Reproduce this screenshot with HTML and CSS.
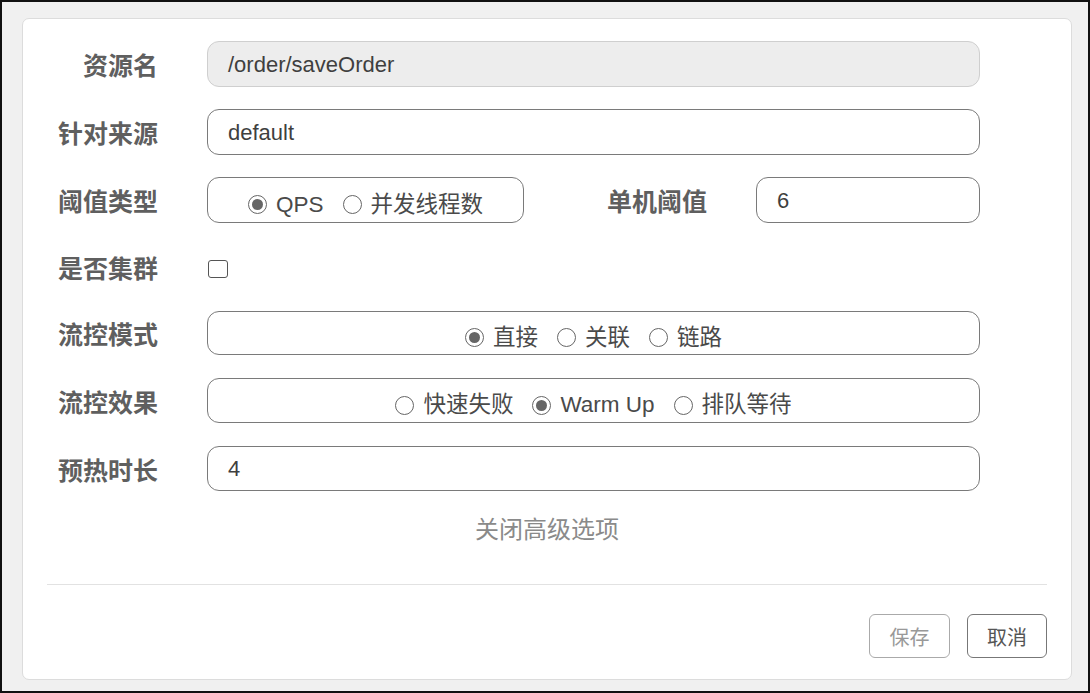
FILE: index.html
```html
<!DOCTYPE html>
<html lang="zh">
<head>
<meta charset="utf-8">
<title>流控规则</title>
<link rel="stylesheet" href="styles.css">
</head>
<body>
<div class="frame">
  <div class="card">
    <div class="form">
      <div class="row">
        <div class="label">资源名</div>
        <div class="input disabled">/order/saveOrder</div>
      </div>
      <div class="row">
        <div class="label">针对来源</div>
        <div class="input">default</div>
      </div>
      <div class="row">
        <div class="label">阈值类型</div>
        <div class="radio-box small">
          <span class="opt"><span class="radio checked"></span><span class="latin">QPS</span></span>
          <span class="opt"><span class="radio"></span><span class="cjk">并发线程数</span></span>
        </div>
        <div class="label label-mid">单机阈值</div>
        <div class="input short">6</div>
      </div>
      <div class="row row-check">
        <div class="label">是否集群</div>
        <span class="checkbox"></span>
      </div>
      <div class="row row-44">
        <div class="label">流控模式</div>
        <div class="radio-box">
          <span class="opt"><span class="radio checked"></span><span class="cjk">直接</span></span>
          <span class="opt"><span class="radio"></span><span class="cjk">关联</span></span>
          <span class="opt"><span class="radio"></span><span class="cjk">链路</span></span>
        </div>
      </div>
      <div class="row row-45">
        <div class="label">流控效果</div>
        <div class="radio-box">
          <span class="opt"><span class="radio"></span><span class="cjk">快速失败</span></span>
          <span class="opt"><span class="radio checked"></span><span class="latin">Warm Up</span></span>
          <span class="opt"><span class="radio"></span><span class="cjk">排队等待</span></span>
        </div>
      </div>
      <div class="row row-45">
        <div class="label">预热时长</div>
        <div class="input">4</div>
      </div>
    </div>
    <div class="toggle">关闭高级选项</div>
    <div class="divider"></div>
    <div class="footer">
      <button class="btn btn-disabled">保存</button>
      <button class="btn">取消</button>
    </div>
  </div>
</div>
</body>
</html>
```

FILE: styles.css
```css
* { box-sizing: border-box; }
html, body {
  margin: 0;
  padding: 0;
}
body {
  font-family: "Liberation Sans", "Noto Sans CJK SC", sans-serif;
  color: #444;
  background: #f0f0f0;
}
.frame {
  width: 1090px;
  height: 693px;
  border: 2px solid #111;
  background: #f0f0f0;
  padding: 16px 16px 11px 20px;
}
.card {
  height: 100%;
  background: #fff;
  border: 1px solid #dcdcdc;
  border-radius: 7px;
  padding-top: 22px;
  display: flex;
  flex-direction: column;
}
.form {
  display: flex;
  flex-direction: column;
  gap: 22px;
}
.row {
  display: flex;
  align-items: center;
  height: 46px;
}
.row-check { height: 44px; }
.row-44 { height: 44px; }
.row-45 { height: 45px; margin-top: 1px; }
.label {
  width: 135px;
  text-align: right;
  margin-right: 49px;
  font-size: 25px;
  font-weight: bold;
  color: #5f5f5f;
  flex: none;
}
.label-mid {
  width: 183px;
  margin-right: 49px;
}
.input {
  width: 773px;
  height: 100%;
  border: 1.5px solid #7a7a7a;
  border-radius: 12px;
  padding-left: 20px;
  padding-top: 1px;
  display: flex;
  align-items: center;
  font-size: 22px;
  color: #3f3f3f;
}
.input.disabled {
  background: #ededed;
  border-color: #cfcfcf;
}
.input.short { width: 224px; }
.radio-box {
  width: 773px;
  height: 100%;
  border: 1.5px solid #7a7a7a;
  border-radius: 12px;
  display: flex;
  align-items: center;
  justify-content: center;
  gap: 19px;
  font-size: 22px;
  color: #4a4a4a;
  padding-top: 9px;
}
.radio-box.small { width: 317px; }
.opt {
  display: inline-flex;
  align-items: center;
  gap: 9px;
}
.cjk {
  line-height: 26px;
  font-size: 22.5px;
}
.latin {
  font-size: 22.5px;
  line-height: 26px;
}
.radio {
  width: 19px;
  height: 19px;
  border: 1.5px solid #666;
  border-radius: 50%;
  display: inline-flex;
  align-items: center;
  justify-content: center;
  flex: none;
}
.radio.checked::after {
  content: "";
  width: 11px;
  height: 11px;
  border-radius: 50%;
  background: #666;
}
.checkbox {
  width: 20px;
  height: 18px;
  border: 1.5px solid #555;
  border-radius: 3px;
  margin-left: 1px;
  margin-top: 4px;
}
.toggle {
  text-align: center;
  font-size: 24px;
  color: #8a8a8a;
  margin-top: 23px;
  line-height: 32px;
}
.divider {
  margin: 38px 24px 0 24px;
  border-top: 1px solid #e2e2e2;
}
.footer {
  display: flex;
  justify-content: flex-end;
  gap: 17px;
  padding: 29px 24px 0 0;
}
.btn {
  font-family: "Liberation Sans", "Noto Sans CJK SC", sans-serif;
  width: 80px;
  height: 44px;
  background: #fff;
  border: 1.5px solid #777;
  border-radius: 6px;
  font-size: 20px;
  color: #555;
  padding: 0;
}
.btn-disabled {
  width: 81px;
  border-color: #aaa;
  color: #999;
}
```
